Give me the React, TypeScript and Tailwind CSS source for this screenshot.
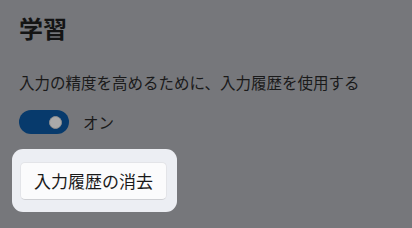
import React from "react";

export default function App() {
  return (
    <div
      className="w-[412px] h-[228px] bg-[#76777b] overflow-hidden text-[#141414]"
      style={{ fontFamily: '"Noto Sans CJK JP", "Noto Sans", sans-serif' }}
    >
      <div className="pl-[19px] pt-[16px]">
        <div className="text-[24px] leading-[24px] font-semibold">学習</div>
        <div className="mt-[31px] text-[15.5px] leading-[22px] text-[#1a1a1a]">
          入力の精度を高めるために、入力履歴を使用する
        </div>
        <div className="mt-[17px] flex items-center gap-[14px]">
          <div className="w-[50px] h-[24px] rounded-full bg-[#073a6c] flex items-center justify-end pr-[7px]">
            <div className="w-[13px] h-[13px] rounded-full bg-[#a9a9a9] border border-[#8f8f8f]" />
          </div>
          <div className="text-[15.5px] leading-[22px] text-[#1a1a1a]">オン</div>
        </div>
      </div>
      <div className="ml-[12px] mt-[15px] w-[165px] h-[63px] rounded-[11px] bg-[#eceef3] pl-[8px] pt-[13px]">
        <div className="w-[147px] h-[38px] rounded-[5px] bg-[#fbfbfc] border border-[#e3e4e8] border-b-[#cfd0d4] flex items-center justify-center text-[17px] text-[#1a1a1a]">
          入力履歴の消去
        </div>
      </div>
    </div>
  );
}
